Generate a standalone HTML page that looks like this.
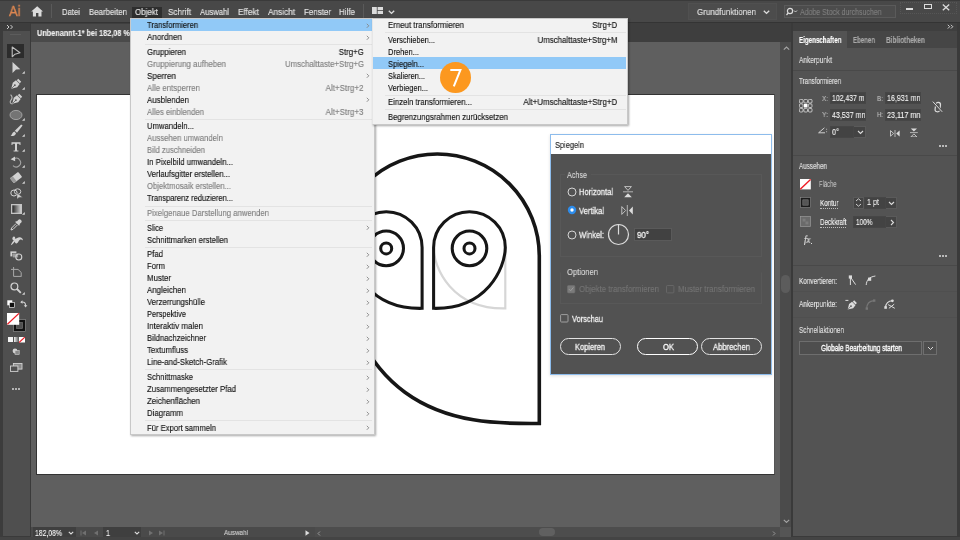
<!DOCTYPE html>
<html><head><meta charset="utf-8"><title>Illustrator</title>
<style>
html,body{margin:0;padding:0;}
body{width:960px;height:540px;overflow:hidden;position:relative;background:#4a4a4a;font-family:"Liberation Sans", sans-serif;}
#r{position:absolute;left:0;top:0;width:960px;height:540px;overflow:hidden;}
#r>div,#r>svg{position:absolute;box-sizing:border-box;}
.t{white-space:nowrap;will-change:transform;-webkit-text-stroke:0.14px;}
</style></head><body><div id="r">
<div style="left:0px;top:0px;width:960px;height:540px;background:#3a3a3a;"></div>
<div style="left:0px;top:1px;width:960px;height:21px;background:#484848;"></div>
<div style="left:0px;top:22px;width:960px;height:1px;background:#343434;"></div>
<div style="left:0px;top:23px;width:3px;height:517px;background:#3c3c3c;"></div>
<div style="left:2.8px;top:23px;width:27px;height:513.2px;background:#4f4f4f;"></div>
<div style="left:2.8px;top:23px;width:27px;height:8px;background:#3d3d3d;"></div>
<div style="left:29.7px;top:23px;width:1.5px;height:513px;background:#3a3a3a;"></div>
<div style="left:31.2px;top:23px;width:760px;height:18.5px;background:#3e3e3e;"></div>
<div style="left:31.2px;top:24px;width:210px;height:17.5px;background:#4a4a4a;"></div>
<div style="left:31.2px;top:41.5px;width:749px;height:485.5px;background:#5f5f5f;"></div>
<div style="left:36px;top:94.4px;width:739px;height:380.6px;background:#ffffff;border:1px solid #333;border-right-color:#555;"></div>
<div style="left:780px;top:42px;width:11px;height:485px;background:#4b4b4b;"></div>
<div style="left:780.9px;top:275.3px;width:9.6px;height:17.4px;background:#5c5c5c;border-radius:4.8px;"></div>
<div style="left:31.2px;top:527px;width:760px;height:10px;background:#4d4d4d;"></div>
<div style="left:780px;top:527px;width:11px;height:10px;background:#555555;"></div>
<div style="left:0px;top:537.2px;width:960px;height:3px;background:#444444;"></div>
<div style="left:791px;top:23px;width:2px;height:513px;background:#3a3a3a;"></div>
<div style="left:793px;top:23px;width:164px;height:8px;background:#3f3f3f;"></div>
<div style="left:793px;top:31px;width:164px;height:17.5px;background:#464646;"></div>
<div style="left:793px;top:31px;width:54px;height:17.5px;background:#535353;"></div>
<div style="left:793px;top:48px;width:164px;height:488px;background:#535353;"></div>
<div style="left:957px;top:23px;width:3px;height:513px;background:#3a3a3a;"></div>
<div class="t" style="left:9.3px;transform-origin:0 50%;top:1.5999999999999996px;font-size:15px;line-height:18px;color:#dd8751;font-weight:400;transform:scaleX(0.862);-webkit-text-stroke:0.35px #dd8751;">Ai</div>
<svg style="left:31px;top:6.3px;" width="12.4" height="10.6" viewBox="0 0 12.4 10.6"><path d="M6.2 0.3 L0.2 5.6 H1.9 V10.4 H5 V7 H7.4 V10.4 H10.5 V5.6 H12.2 Z" fill="#dcdcdc"/></svg>
<div style="left:51px;top:4px;width:1px;height:14px;background:#5a5a5a;"></div>
<div style="left:131.5px;top:7px;width:30.5px;height:12px;background:#2e2e2e;"></div>
<div class="t" style="left:62px;transform-origin:0 50%;top:5.5px;font-size:9px;line-height:12px;color:#e6e6e6;font-weight:400;transform:scaleX(0.857);">Datei</div>
<div class="t" style="left:89px;transform-origin:0 50%;top:5.5px;font-size:9px;line-height:12px;color:#e6e6e6;font-weight:400;transform:scaleX(0.873);">Bearbeiten</div>
<div class="t" style="left:135px;transform-origin:0 50%;top:5.5px;font-size:9px;line-height:12px;color:#e6e6e6;font-weight:400;transform:scaleX(0.884);">Objekt</div>
<div class="t" style="left:168px;transform-origin:0 50%;top:5.5px;font-size:9px;line-height:12px;color:#e6e6e6;font-weight:400;transform:scaleX(0.901);">Schrift</div>
<div class="t" style="left:200px;transform-origin:0 50%;top:5.5px;font-size:9px;line-height:12px;color:#e6e6e6;font-weight:400;transform:scaleX(0.852);">Auswahl</div>
<div class="t" style="left:238px;transform-origin:0 50%;top:5.5px;font-size:9px;line-height:12px;color:#e6e6e6;font-weight:400;transform:scaleX(0.919);">Effekt</div>
<div class="t" style="left:268px;transform-origin:0 50%;top:5.5px;font-size:9px;line-height:12px;color:#e6e6e6;font-weight:400;transform:scaleX(0.915);">Ansicht</div>
<div class="t" style="left:304px;transform-origin:0 50%;top:5.5px;font-size:9px;line-height:12px;color:#e6e6e6;font-weight:400;transform:scaleX(0.885);">Fenster</div>
<div class="t" style="left:339px;transform-origin:0 50%;top:5.5px;font-size:9px;line-height:12px;color:#e6e6e6;font-weight:400;transform:scaleX(0.888);">Hilfe</div>
<div style="left:363px;top:4px;width:1px;height:14px;background:#5a5a5a;"></div>
<svg style="left:372px;top:7.2px;" width="11" height="7.2" viewBox="0 0 11 7.2"><rect x="0" y="0" width="4.8" height="7.2" fill="#dcdcdc"/><rect x="5.6" y="0" width="5.4" height="3.2" fill="#dcdcdc"/><rect x="5.6" y="4" width="5.4" height="3.2" fill="#dcdcdc"/></svg>
<svg style="left:388px;top:10px;" width="7" height="5" viewBox="0 0 7 5"><path d="M0.8 0.8 L3.5 3.4 L6.2 0.8" stroke="#dcdcdc" stroke-width="1.4" fill="none"/></svg>
<div style="left:688px;top:2.5px;width:89px;height:17px;background:#4c4c4c;border:1px solid #505050;"></div>
<div class="t" style="left:697px;transform-origin:0 50%;top:5.5px;font-size:9px;line-height:12px;color:#e0e0e0;font-weight:400;transform:scaleX(0.887);">Grundfunktionen</div>
<svg style="left:763px;top:10.3px;" width="7" height="5" viewBox="0 0 7 5"><path d="M0.8 0.8 L3.5 3.4 L6.2 0.8" stroke="#dcdcdc" stroke-width="1.4" fill="none"/></svg>
<div style="left:783.5px;top:4.5px;width:112px;height:13px;background:#4c4c4c;border:1px solid #5a5a5a;"></div>
<svg style="left:786px;top:7px;" width="12" height="9" viewBox="0 0 12 9"><circle cx="4" cy="4" r="2.6" stroke="#dcdcdc" stroke-width="1.2" fill="none"/><path d="M2.2 6 L0.5 8" stroke="#dcdcdc" stroke-width="1.2"/><path d="M8 3.5 L9.5 5 L11 3.5" stroke="#dcdcdc" stroke-width="0.9" fill="none"/></svg>
<div class="t" style="left:800px;transform-origin:0 50%;top:5.5px;font-size:9px;line-height:12px;color:#7e7e7e;font-weight:400;transform:scaleX(0.776);">Adobe Stock durchsuchen</div>
<div style="left:900px;top:1.5px;width:57px;height:12.5px;border:1px dotted #565656;"></div>
<div style="left:906px;top:8px;width:7px;height:1.8px;background:#dcdcdc;"></div>
<div style="left:924.3px;top:4.3px;width:7.8px;height:5.2px;border:1.2px solid #dcdcdc;border-top-width:1.8px;"></div>
<svg style="left:942px;top:3.5px;" width="8" height="7" viewBox="0 0 8 7"><path d="M0.8 0.6 L7.2 6.2 M7.2 0.6 L0.8 6.2" stroke="#dcdcdc" stroke-width="1.3"/></svg>
<div class="t" style="left:37px;transform-origin:0 50%;top:27.75px;font-size:8.5px;line-height:11.5px;color:#ececec;font-weight:700;transform:scaleX(0.859);">Unbenannt-1* bei 182,08 % (RGB/GPU-Vorschau)</div>
<svg style="left:6px;top:24px;" width="8" height="6" viewBox="0 0 8 6"><path d="M1 1 L3 3 L1 5 M4.5 1 L6.5 3 L4.5 5" stroke="#dcdcdc" stroke-width="0.9" fill="none"/></svg>
<div style="left:10px;top:34px;width:11px;height:1px;background:#5c5c5c;"></div>
<svg style="left:0px;top:0px;" width="960" height="540" viewBox="0 0 960 540">
<path d="M505.3 247.5 L505.3 308.35 C452.2 309.5 433.9 268.4 433.6 247.5" fill="none" stroke="#d6d6d6" stroke-width="2.2"/>
<g fill="none" stroke="#161616" stroke-width="3.05" stroke-linejoin="miter">
<path stroke-width="3.6" d="M335 172 C322 431.8 477.4 423.5 539.3 423.5 L539.3 256 A102 102 0 0 0 335.3 256"/>
<path d="M433.6 308.35 L433.6 247.5 A35.85 35.85 0 0 1 505.3 247.5 C505 268.4 486.7 309.5 433.6 308.35 Z"/>
<circle cx="469.5" cy="248.4" r="17.3"/>
<circle cx="469.5" cy="248.4" r="5.5"/>
<path d="M422.1 308.35 L422.1 247.5 A35.85 35.85 0 0 0 350.4 247.5 C350.7 268.4 369 309.5 422.1 308.35 Z"/>
<circle cx="386.2" cy="248.4" r="17.3"/>
<circle cx="386.2" cy="248.4" r="5.5"/>
</g>
</svg>
<div style="left:130px;top:18px;width:245px;height:417px;background:#f2f2f2;border:1px solid #c8c8c8;box-shadow:1px 1px 2px rgba(0,0,0,0.35);"></div>
<div style="left:131px;top:19px;width:241px;height:12px;background:#91c9f7;"></div>
<div class="t" style="left:147px;transform-origin:0 50%;top:19.0px;font-size:9px;line-height:12px;color:#111;font-weight:400;transform:scaleX(0.840);">Transformieren</div>
<svg style="left:366px;top:22.5px;" width="4" height="6" viewBox="0 0 4 6"><path d="M0.8 0.8 L2.8 2.8 L0.8 4.8" stroke="#868686" stroke-width="0.9" fill="none"/></svg>
<div class="t" style="left:147px;transform-origin:0 50%;top:31.0px;font-size:9px;line-height:12px;color:#111;font-weight:400;transform:scaleX(0.896);">Anordnen</div>
<svg style="left:366px;top:34.5px;" width="4" height="6" viewBox="0 0 4 6"><path d="M0.8 0.8 L2.8 2.8 L0.8 4.8" stroke="#868686" stroke-width="0.9" fill="none"/></svg>
<div style="left:145px;top:43.5px;width:227px;height:1px;background:#e3e3e3;"></div>
<div class="t" style="left:147px;transform-origin:0 50%;top:45.6px;font-size:9px;line-height:12px;color:#111;font-weight:400;transform:scaleX(0.866);">Gruppieren</div>
<div class="t" style="right:596px;transform-origin:100% 50%;top:45.6px;font-size:9px;line-height:12px;color:#111;font-weight:400;transform:scaleX(0.869);">Strg+G</div>
<div class="t" style="left:147px;transform-origin:0 50%;top:57.6px;font-size:9px;line-height:12px;color:#7f7f7f;font-weight:400;transform:scaleX(0.877);">Gruppierung aufheben</div>
<div class="t" style="right:596px;transform-origin:100% 50%;top:57.6px;font-size:9px;line-height:12px;color:#7f7f7f;font-weight:400;transform:scaleX(0.868);">Umschalttaste+Strg+G</div>
<div class="t" style="left:147px;transform-origin:0 50%;top:69.6px;font-size:9px;line-height:12px;color:#111;font-weight:400;transform:scaleX(0.905);">Sperren</div>
<svg style="left:366px;top:73.1px;" width="4" height="6" viewBox="0 0 4 6"><path d="M0.8 0.8 L2.8 2.8 L0.8 4.8" stroke="#868686" stroke-width="0.9" fill="none"/></svg>
<div class="t" style="left:147px;transform-origin:0 50%;top:81.6px;font-size:9px;line-height:12px;color:#7f7f7f;font-weight:400;transform:scaleX(0.875);">Alle entsperren</div>
<div class="t" style="right:596px;transform-origin:100% 50%;top:81.6px;font-size:9px;line-height:12px;color:#7f7f7f;font-weight:400;transform:scaleX(0.893);">Alt+Strg+2</div>
<div class="t" style="left:147px;transform-origin:0 50%;top:93.6px;font-size:9px;line-height:12px;color:#111;font-weight:400;transform:scaleX(0.883);">Ausblenden</div>
<svg style="left:366px;top:97.1px;" width="4" height="6" viewBox="0 0 4 6"><path d="M0.8 0.8 L2.8 2.8 L0.8 4.8" stroke="#868686" stroke-width="0.9" fill="none"/></svg>
<div class="t" style="left:147px;transform-origin:0 50%;top:105.5px;font-size:9px;line-height:12px;color:#7f7f7f;font-weight:400;transform:scaleX(0.863);">Alles einblenden</div>
<div class="t" style="right:596px;transform-origin:100% 50%;top:105.5px;font-size:9px;line-height:12px;color:#7f7f7f;font-weight:400;transform:scaleX(0.893);">Alt+Strg+3</div>
<div style="left:145px;top:118.5px;width:227px;height:1px;background:#e3e3e3;"></div>
<div class="t" style="left:147px;transform-origin:0 50%;top:120.0px;font-size:9px;line-height:12px;color:#111;font-weight:400;transform:scaleX(0.854);">Umwandeln...</div>
<div class="t" style="left:147px;transform-origin:0 50%;top:132.0px;font-size:9px;line-height:12px;color:#7f7f7f;font-weight:400;transform:scaleX(0.858);">Aussehen umwandeln</div>
<div class="t" style="left:147px;transform-origin:0 50%;top:144.0px;font-size:9px;line-height:12px;color:#7f7f7f;font-weight:400;transform:scaleX(0.852);">Bild zuschneiden</div>
<div class="t" style="left:147px;transform-origin:0 50%;top:156.0px;font-size:9px;line-height:12px;color:#111;font-weight:400;transform:scaleX(0.864);">In Pixelbild umwandeln...</div>
<div class="t" style="left:147px;transform-origin:0 50%;top:168.0px;font-size:9px;line-height:12px;color:#111;font-weight:400;transform:scaleX(0.860);">Verlaufsgitter erstellen...</div>
<div class="t" style="left:147px;transform-origin:0 50%;top:180.0px;font-size:9px;line-height:12px;color:#7f7f7f;font-weight:400;transform:scaleX(0.852);">Objektmosaik erstellen...</div>
<div class="t" style="left:147px;transform-origin:0 50%;top:192.0px;font-size:9px;line-height:12px;color:#111;font-weight:400;transform:scaleX(0.837);">Transparenz reduzieren...</div>
<div style="left:145px;top:205.5px;width:227px;height:1px;background:#e3e3e3;"></div>
<div class="t" style="left:147px;transform-origin:0 50%;top:207.0px;font-size:9px;line-height:12px;color:#7f7f7f;font-weight:400;transform:scaleX(0.862);">Pixelgenaue Darstellung anwenden</div>
<div style="left:145px;top:219.5px;width:227px;height:1px;background:#e3e3e3;"></div>
<div class="t" style="left:147px;transform-origin:0 50%;top:221.5px;font-size:9px;line-height:12px;color:#111;font-weight:400;transform:scaleX(0.820);">Slice</div>
<svg style="left:366px;top:225.0px;" width="4" height="6" viewBox="0 0 4 6"><path d="M0.8 0.8 L2.8 2.8 L0.8 4.8" stroke="#868686" stroke-width="0.9" fill="none"/></svg>
<div class="t" style="left:147px;transform-origin:0 50%;top:233.5px;font-size:9px;line-height:12px;color:#111;font-weight:400;transform:scaleX(0.861);">Schnittmarken erstellen</div>
<div style="left:145px;top:246.5px;width:227px;height:1px;background:#e3e3e3;"></div>
<div class="t" style="left:147px;transform-origin:0 50%;top:248.0px;font-size:9px;line-height:12px;color:#111;font-weight:400;transform:scaleX(0.864);">Pfad</div>
<svg style="left:366px;top:251.5px;" width="4" height="6" viewBox="0 0 4 6"><path d="M0.8 0.8 L2.8 2.8 L0.8 4.8" stroke="#868686" stroke-width="0.9" fill="none"/></svg>
<div class="t" style="left:147px;transform-origin:0 50%;top:260.0px;font-size:9px;line-height:12px;color:#111;font-weight:400;transform:scaleX(0.857);">Form</div>
<svg style="left:366px;top:263.5px;" width="4" height="6" viewBox="0 0 4 6"><path d="M0.8 0.8 L2.8 2.8 L0.8 4.8" stroke="#868686" stroke-width="0.9" fill="none"/></svg>
<div class="t" style="left:147px;transform-origin:0 50%;top:272.0px;font-size:9px;line-height:12px;color:#111;font-weight:400;transform:scaleX(0.872);">Muster</div>
<svg style="left:366px;top:275.5px;" width="4" height="6" viewBox="0 0 4 6"><path d="M0.8 0.8 L2.8 2.8 L0.8 4.8" stroke="#868686" stroke-width="0.9" fill="none"/></svg>
<div class="t" style="left:147px;transform-origin:0 50%;top:284.0px;font-size:9px;line-height:12px;color:#111;font-weight:400;transform:scaleX(0.875);">Angleichen</div>
<svg style="left:366px;top:287.5px;" width="4" height="6" viewBox="0 0 4 6"><path d="M0.8 0.8 L2.8 2.8 L0.8 4.8" stroke="#868686" stroke-width="0.9" fill="none"/></svg>
<div class="t" style="left:147px;transform-origin:0 50%;top:296.0px;font-size:9px;line-height:12px;color:#111;font-weight:400;transform:scaleX(0.859);">Verzerrungshülle</div>
<svg style="left:366px;top:299.5px;" width="4" height="6" viewBox="0 0 4 6"><path d="M0.8 0.8 L2.8 2.8 L0.8 4.8" stroke="#868686" stroke-width="0.9" fill="none"/></svg>
<div class="t" style="left:147px;transform-origin:0 50%;top:308.0px;font-size:9px;line-height:12px;color:#111;font-weight:400;transform:scaleX(0.829);">Perspektive</div>
<svg style="left:366px;top:311.5px;" width="4" height="6" viewBox="0 0 4 6"><path d="M0.8 0.8 L2.8 2.8 L0.8 4.8" stroke="#868686" stroke-width="0.9" fill="none"/></svg>
<div class="t" style="left:147px;transform-origin:0 50%;top:320.0px;font-size:9px;line-height:12px;color:#111;font-weight:400;transform:scaleX(0.881);">Interaktiv malen</div>
<svg style="left:366px;top:323.5px;" width="4" height="6" viewBox="0 0 4 6"><path d="M0.8 0.8 L2.8 2.8 L0.8 4.8" stroke="#868686" stroke-width="0.9" fill="none"/></svg>
<div class="t" style="left:147px;transform-origin:0 50%;top:332.0px;font-size:9px;line-height:12px;color:#111;font-weight:400;transform:scaleX(0.861);">Bildnachzeichner</div>
<svg style="left:366px;top:335.5px;" width="4" height="6" viewBox="0 0 4 6"><path d="M0.8 0.8 L2.8 2.8 L0.8 4.8" stroke="#868686" stroke-width="0.9" fill="none"/></svg>
<div class="t" style="left:147px;transform-origin:0 50%;top:344.0px;font-size:9px;line-height:12px;color:#111;font-weight:400;transform:scaleX(0.863);">Textumfluss</div>
<svg style="left:366px;top:347.5px;" width="4" height="6" viewBox="0 0 4 6"><path d="M0.8 0.8 L2.8 2.8 L0.8 4.8" stroke="#868686" stroke-width="0.9" fill="none"/></svg>
<div class="t" style="left:147px;transform-origin:0 50%;top:356.0px;font-size:9px;line-height:12px;color:#111;font-weight:400;transform:scaleX(0.864);">Line-and-Sketch-Grafik</div>
<svg style="left:366px;top:359.5px;" width="4" height="6" viewBox="0 0 4 6"><path d="M0.8 0.8 L2.8 2.8 L0.8 4.8" stroke="#868686" stroke-width="0.9" fill="none"/></svg>
<div style="left:145px;top:369px;width:227px;height:1px;background:#e3e3e3;"></div>
<div class="t" style="left:147px;transform-origin:0 50%;top:371.0px;font-size:9px;line-height:12px;color:#111;font-weight:400;transform:scaleX(0.851);">Schnittmaske</div>
<svg style="left:366px;top:374.5px;" width="4" height="6" viewBox="0 0 4 6"><path d="M0.8 0.8 L2.8 2.8 L0.8 4.8" stroke="#868686" stroke-width="0.9" fill="none"/></svg>
<div class="t" style="left:147px;transform-origin:0 50%;top:383.0px;font-size:9px;line-height:12px;color:#111;font-weight:400;transform:scaleX(0.864);">Zusammengesetzter Pfad</div>
<svg style="left:366px;top:386.5px;" width="4" height="6" viewBox="0 0 4 6"><path d="M0.8 0.8 L2.8 2.8 L0.8 4.8" stroke="#868686" stroke-width="0.9" fill="none"/></svg>
<div class="t" style="left:147px;transform-origin:0 50%;top:395.0px;font-size:9px;line-height:12px;color:#111;font-weight:400;transform:scaleX(0.868);">Zeichenflächen</div>
<svg style="left:366px;top:398.5px;" width="4" height="6" viewBox="0 0 4 6"><path d="M0.8 0.8 L2.8 2.8 L0.8 4.8" stroke="#868686" stroke-width="0.9" fill="none"/></svg>
<div class="t" style="left:147px;transform-origin:0 50%;top:407.0px;font-size:9px;line-height:12px;color:#111;font-weight:400;transform:scaleX(0.867);">Diagramm</div>
<svg style="left:366px;top:410.5px;" width="4" height="6" viewBox="0 0 4 6"><path d="M0.8 0.8 L2.8 2.8 L0.8 4.8" stroke="#868686" stroke-width="0.9" fill="none"/></svg>
<div style="left:145px;top:420px;width:227px;height:1px;background:#e3e3e3;"></div>
<div class="t" style="left:147px;transform-origin:0 50%;top:421.5px;font-size:9px;line-height:12px;color:#111;font-weight:400;transform:scaleX(0.852);">Für Export sammeln</div>
<svg style="left:366px;top:425.0px;" width="4" height="6" viewBox="0 0 4 6"><path d="M0.8 0.8 L2.8 2.8 L0.8 4.8" stroke="#868686" stroke-width="0.9" fill="none"/></svg>
<div style="left:372px;top:18px;width:256px;height:107px;background:#f2f2f2;border:1px solid #c8c8c8;border-left-color:#e6e6e6;box-shadow:1px 1px 2px rgba(0,0,0,0.35);"></div>
<div style="left:373px;top:57px;width:253px;height:12px;background:#91c9f7;"></div>
<div class="t" style="left:388px;transform-origin:0 50%;top:19.0px;font-size:9px;line-height:12px;color:#111;font-weight:400;transform:scaleX(0.873);">Erneut transformieren</div>
<div class="t" style="right:342.5px;transform-origin:100% 50%;top:19.0px;font-size:9px;line-height:12px;color:#111;font-weight:400;transform:scaleX(0.884);">Strg+D</div>
<div style="left:385px;top:32px;width:241px;height:1px;background:#e3e3e3;"></div>
<div class="t" style="left:388px;transform-origin:0 50%;top:34.0px;font-size:9px;line-height:12px;color:#111;font-weight:400;transform:scaleX(0.824);">Verschieben...</div>
<div class="t" style="right:342.5px;transform-origin:100% 50%;top:34.0px;font-size:9px;line-height:12px;color:#111;font-weight:400;transform:scaleX(0.874);">Umschalttaste+Strg+M</div>
<div class="t" style="left:388px;transform-origin:0 50%;top:46.0px;font-size:9px;line-height:12px;color:#111;font-weight:400;transform:scaleX(0.837);">Drehen...</div>
<div class="t" style="left:388px;transform-origin:0 50%;top:57.5px;font-size:9px;line-height:12px;color:#111;font-weight:400;transform:scaleX(0.846);">Spiegeln...</div>
<div class="t" style="left:388px;transform-origin:0 50%;top:69.5px;font-size:9px;line-height:12px;color:#111;font-weight:400;transform:scaleX(0.822);">Skalieren...</div>
<div class="t" style="left:388px;transform-origin:0 50%;top:81.5px;font-size:9px;line-height:12px;color:#111;font-weight:400;transform:scaleX(0.833);">Verbiegen...</div>
<div style="left:385px;top:94.5px;width:241px;height:1px;background:#e3e3e3;"></div>
<div class="t" style="left:388px;transform-origin:0 50%;top:96.0px;font-size:9px;line-height:12px;color:#111;font-weight:400;transform:scaleX(0.861);">Einzeln transformieren...</div>
<div class="t" style="right:342.5px;transform-origin:100% 50%;top:96.0px;font-size:9px;line-height:12px;color:#111;font-weight:400;transform:scaleX(0.884);">Alt+Umschalttaste+Strg+D</div>
<div style="left:385px;top:109px;width:241px;height:1px;background:#e3e3e3;"></div>
<div class="t" style="left:388px;transform-origin:0 50%;top:110.5px;font-size:9px;line-height:12px;color:#111;font-weight:400;transform:scaleX(0.863);">Begrenzungsrahmen zurücksetzen</div>
<div style="left:440.1px;top:61.9px;width:31px;height:31.4px;background:#fc981f;border-radius:50%;"></div>
<svg style="left:445px;top:64px;" width="22" height="26" viewBox="0 0 22 26"><path d="M5.3 5.9 H15.4 L8.8 22.4" fill="none" stroke="#fff" stroke-width="2" stroke-linejoin="miter" stroke-linecap="butt"/></svg>
<div style="left:7.2px;top:44.1px;width:17.3px;height:13.9px;background:#2c2c2c;"></div>
<svg style="left:10px;top:45.7px;" width="12" height="13" viewBox="0 0 12 13"><path d="M2.2 1 L2.2 10.8 L5 8.2 L10 6.8 Z" fill="none" stroke="#bebebe" stroke-width="1.1" stroke-linejoin="round"/></svg>
<svg style="left:11px;top:61px;" width="12" height="13" viewBox="0 0 12 13"><path d="M1.5 1 L1.5 12 L5 8.6 L9.3 8.2 Z" fill="#d2d2d2"/></svg>
<svg style="left:22.4px;top:71.3px;" width="2.8" height="2.8" viewBox="0 0 2.8 2.8"><path d="M2.8 0 V2.8 H0 Z" fill="#d2d2d2"/></svg>
<svg style="left:9.0px;top:77.6px;overflow:visible;" width="13" height="13" viewBox="0 0 13 13"><g transform="translate(6.5 6.5) scale(0.84) rotate(45) translate(-6.5 -5.5)"><path d="M4 -1.6 H9 V0.8 H4 Z M3.4 1.6 H9.6 L10.2 6.4 L6.5 12.6 L2.8 6.4 Z" fill="#d2d2d2"/><circle cx="6.5" cy="6.6" r="1.1" fill="#4f4f4f"/><path d="M6.5 7.2 V12" stroke="#4f4f4f" stroke-width="0.8"/></g></svg>
<svg style="left:22.4px;top:87.1px;" width="2.8" height="2.8" viewBox="0 0 2.8 2.8"><path d="M2.8 0 V2.8 H0 Z" fill="#d2d2d2"/></svg>
<svg style="left:9.8px;top:93.4px;overflow:visible;" width="13" height="13" viewBox="0 0 13 13"><g transform="translate(6.5 6.5) scale(0.84) rotate(45) translate(-6.5 -5.5)"><path d="M4 -1.6 H9 V0.8 H4 Z M3.4 1.6 H9.6 L10.2 6.4 L6.5 12.6 L2.8 6.4 Z" fill="#d2d2d2"/><circle cx="6.5" cy="6.6" r="1.1" fill="#4f4f4f"/><path d="M6.5 7.2 V12" stroke="#4f4f4f" stroke-width="0.8"/></g></svg>
<svg style="left:8.5px;top:94px;" width="6" height="11" viewBox="0 0 6 11"><path d="M1.6 0.6 C3.6 2.6 3.4 4.4 2 6.2 C0.6 8 1 9.6 3.6 10" fill="none" stroke="#b8b8b8" stroke-width="1.1"/></svg>
<svg style="left:9px;top:108.5px;" width="14" height="12" viewBox="0 0 14 12"><ellipse cx="7" cy="6" rx="6" ry="4.6" fill="#747474" stroke="#a8a8a8" stroke-width="0.9"/></svg>
<svg style="left:22.4px;top:118.3px;" width="2.8" height="2.8" viewBox="0 0 2.8 2.8"><path d="M2.8 0 V2.8 H0 Z" fill="#d2d2d2"/></svg>
<svg style="left:10px;top:123.5px;" width="13" height="13" viewBox="0 0 13 13"><path d="M11.2 0.4 L12.6 1.6 L7 8.8 L4.8 6.8 Z" fill="#d2d2d2"/><path d="M4.4 7.6 L6 9.2 C5.6 11.8 2.6 12.4 0.6 12 C2.2 11 2 8.4 4.4 7.6 Z" fill="#d2d2d2"/></svg>
<svg style="left:22.4px;top:134.3px;" width="2.8" height="2.8" viewBox="0 0 2.8 2.8"><path d="M2.8 0 V2.8 H0 Z" fill="#d2d2d2"/></svg>
<svg style="left:11px;top:141.5px;" width="10" height="10" viewBox="0 0 10 10"><path d="M0.5 0.3 H9.5 V3 H8.5 V1.8 H6 V8.4 H7.4 V9.6 H2.6 V8.4 H4 V1.8 H1.5 V3 H0.5 Z" fill="#d2d2d2"/></svg>
<svg style="left:22.4px;top:149.3px;" width="2.8" height="2.8" viewBox="0 0 2.8 2.8"><path d="M2.8 0 V2.8 H0 Z" fill="#d2d2d2"/></svg>
<svg style="left:10px;top:155.5px;" width="12" height="12" viewBox="0 0 12 12"><path d="M4.2 2.6 A4.4 4.4 0 1 1 3 9.6" fill="none" stroke="#a4a4a4" stroke-width="1.1"/><path d="M0.6 3.2 L5 0.4 L5.2 5.2 Z" fill="#d2d2d2"/></svg>
<svg style="left:22.4px;top:165.3px;" width="2.8" height="2.8" viewBox="0 0 2.8 2.8"><path d="M2.8 0 V2.8 H0 Z" fill="#d2d2d2"/></svg>
<svg style="left:10px;top:171.5px;" width="12" height="11" viewBox="0 0 12 11"><g transform="rotate(-38 6 5.5)"><rect x="0.8" y="2.4" width="10.4" height="6.4" rx="0.8" fill="#d2d2d2"/><rect x="0.8" y="2.4" width="3.4" height="6.4" fill="#9a9a9a"/></g></svg>
<svg style="left:22.4px;top:180.8px;" width="2.8" height="2.8" viewBox="0 0 2.8 2.8"><path d="M2.8 0 V2.8 H0 Z" fill="#d2d2d2"/></svg>
<svg style="left:9.5px;top:188px;" width="14" height="12" viewBox="0 0 14 12"><ellipse cx="4" cy="5" rx="3.2" ry="3" fill="none" stroke="#d2d2d2" stroke-width="1"/><ellipse cx="7.6" cy="3.6" rx="3.2" ry="2.8" fill="none" stroke="#d2d2d2" stroke-width="1"/><path d="M7 5 L7 11.2 L9 9.4 L12.6 9.2 Z" fill="#d2d2d2" stroke="#4f4f4f" stroke-width="0.5"/></svg>
<svg style="left:10.5px;top:204px;" width="11" height="10" viewBox="0 0 11 10"><defs><linearGradient id="gg" x1="0" x2="1"><stop offset="0.12" stop-color="#2e2e2e"/><stop offset="0.95" stop-color="#d0d0d0"/></linearGradient></defs><rect x="0.6" y="0.6" width="9.8" height="8.8" fill="url(#gg)" stroke="#c4c4c4" stroke-width="1.4"/></svg>
<svg style="left:22.4px;top:212.3px;" width="2.8" height="2.8" viewBox="0 0 2.8 2.8"><path d="M2.8 0 V2.8 H0 Z" fill="#d2d2d2"/></svg>
<svg style="left:10px;top:219px;" width="12" height="12" viewBox="0 0 12 12"><path d="M8.2 1 A1.9 1.9 0 0 1 11 3.8 L9.4 5.2 L10 5.8 L9 6.8 L5.2 3 L6.2 2 L6.8 2.6 Z" fill="#d2d2d2"/><path d="M6 4.6 L1.6 9 L1 11 L3 10.4 L7.4 6" fill="none" stroke="#d2d2d2" stroke-width="1"/></svg>
<svg style="left:9.5px;top:235.5px;" width="14" height="10" viewBox="0 0 14 10"><path d="M3.6 0.6 C5 0.4 5.6 1.6 4.8 2.8 C7 2.8 7.6 1 10 1.2 C12 1.4 13.2 3 12.8 4.4 C12 3.6 10.6 3.2 9.6 4 C8 5.2 8.6 7 6.6 7.4 C5.4 7.6 4.8 6.6 5 5.6 C3.6 6.6 3 8.6 0.8 9.2 C1.4 7.6 2.4 5.8 3.8 4.4 C2.4 4.2 2 2.8 2.6 1.6 Z" fill="#d2d2d2"/></svg>
<svg style="left:10px;top:251px;" width="13" height="10" viewBox="0 0 13 10"><rect x="0.4" y="0.4" width="6" height="5" fill="#d2d2d2"/><rect x="2.6" y="2.2" width="5.6" height="4.6" fill="#9c9c9c" stroke="#4f4f4f" stroke-width="0.5"/><circle cx="8.8" cy="6" r="3" fill="none" stroke="#d2d2d2" stroke-width="1.1"/></svg>
<svg style="left:10.5px;top:267px;" width="11" height="10" viewBox="0 0 11 10"><path d="M2.6 0 V9.4 H10.6 M0 2.4 H7 L10.2 5.4 V9" fill="none" stroke="#a8a8a8" stroke-width="1"/></svg>
<svg style="left:10px;top:282px;" width="12" height="12" viewBox="0 0 12 12"><circle cx="4.4" cy="4.4" r="3.4" fill="none" stroke="#d2d2d2" stroke-width="1.2"/><path d="M7 7 L10.8 10.8" stroke="#d2d2d2" stroke-width="1.8"/></svg>
<svg style="left:22.4px;top:291.8px;" width="2.8" height="2.8" viewBox="0 0 2.8 2.8"><path d="M2.8 0 V2.8 H0 Z" fill="#d2d2d2"/></svg>
<svg style="left:6.5px;top:300px;" width="8" height="8" viewBox="0 0 8 8"><rect x="0.3" y="0.3" width="5" height="5" fill="#fff"/><rect x="2.4" y="2.4" width="5" height="5" fill="#111" stroke="#fff" stroke-width="0.6"/></svg>
<svg style="left:19.5px;top:300px;" width="8" height="8" viewBox="0 0 8 8"><path d="M1.4 2 C4.4 1.6 5.6 3 5.6 6" fill="none" stroke="#d2d2d2" stroke-width="1.1"/><path d="M0.2 2.2 L2.4 0.2 L2.6 3.8 Z M3.8 5.2 L7.4 5.2 L5.6 7.6 Z" fill="#d2d2d2"/></svg>
<svg style="left:13.3px;top:319px;" width="13" height="13" viewBox="0 0 13 13"><rect x="0.5" y="0.5" width="12" height="12" fill="#111" stroke="#9a9a9a" stroke-width="0.6"/><rect x="3.4" y="3.4" width="6.2" height="6.2" fill="#4f4f4f" stroke="#777" stroke-width="0.6"/></svg>
<svg style="left:6.9px;top:312.5px;" width="13" height="12" viewBox="0 0 13 12"><rect x="0" y="0" width="12.2" height="11.8" fill="#fff"/><path d="M0.3 11.4 L12 0.4" stroke="#ee1c25" stroke-width="1.3"/></svg>
<div style="left:7.5px;top:336.5px;width:5.5px;height:5.5px;background:#f4f4f4;"></div>
<div style="left:13.5px;top:336.5px;width:5px;height:5.5px;background:linear-gradient(90deg,#f0f0f0,#555);"></div>
<svg style="left:19px;top:336.5px;" width="6" height="6" viewBox="0 0 6 6"><rect x="0" y="0" width="6" height="5.5" fill="#fff"/><path d="M0 5.5 L6 0" stroke="#ee1c25" stroke-width="1.2"/></svg>
<svg style="left:12px;top:348px;" width="8" height="7" viewBox="0 0 8 7"><circle cx="3" cy="3" r="2.4" fill="#d2d2d2"/><rect x="3" y="2.6" width="4.2" height="3.8" fill="#8a8a8a" stroke="#d2d2d2" stroke-width="0.6"/></svg>
<svg style="left:10px;top:363px;" width="13" height="9" viewBox="0 0 13 9"><rect x="3.4" y="0.5" width="8.6" height="5.6" fill="#8a8a8a" stroke="#d2d2d2" stroke-width="0.9"/><rect x="0.5" y="3" width="7.4" height="5.4" fill="#4f4f4f" stroke="#d2d2d2" stroke-width="0.9"/></svg>
<div style="left:12.2px;top:388.2px;width:1.8px;height:1.8px;background:#d2d2d2;border-radius:50%;"></div>
<div style="left:15.2px;top:388.2px;width:1.8px;height:1.8px;background:#d2d2d2;border-radius:50%;"></div>
<div style="left:18.2px;top:388.2px;width:1.8px;height:1.8px;background:#d2d2d2;border-radius:50%;"></div>
<div style="left:550px;top:134px;width:222px;height:241px;background:#525252;border:1px solid #8dbcec;box-shadow:0 1px 3px rgba(0,0,0,0.12);"></div>
<div style="left:551px;top:135px;width:220px;height:19px;background:#ffffff;"></div>
<div class="t" style="left:555px;transform-origin:0 50%;top:138.75px;font-size:9.5px;line-height:12.5px;color:#222;font-weight:400;transform:scaleX(0.784);">Spiegeln</div>
<div style="left:560px;top:174px;width:202px;height:83px;border:1px solid #585858;"></div>
<div style="left:565px;top:169px;width:26px;height:10px;background:#525252;"></div>
<div class="t" style="left:567px;transform-origin:0 50%;top:168.5px;font-size:9px;line-height:12px;color:#d8d8d8;font-weight:400;transform:scaleX(0.800);">Achse</div>
<svg style="left:566.5px;top:187px;" width="10" height="10" viewBox="0 0 10 10"><circle cx="5" cy="5" r="4" fill="none" stroke="#d4d4d4" stroke-width="1"/></svg>
<div class="t" style="left:579px;transform-origin:0 50%;top:186.0px;font-size:9px;line-height:12px;color:#f0f0f0;font-weight:400;transform:scaleX(0.839);-webkit-text-stroke:0.3px;">Horizontal</div>
<svg style="left:623px;top:186px;" width="10" height="12" viewBox="0 0 10 12"><path d="M1.6 0.6 H8.4 L5 4.4 Z" fill="none" stroke="#dcdcdc" stroke-width="0.8"/><path d="M0 5.8 H10" stroke="#dcdcdc" stroke-width="0.7"/><path d="M1.2 11.2 H8.8 L5 7.2 Z" fill="#dcdcdc"/></svg>
<svg style="left:566.5px;top:205px;" width="10" height="10" viewBox="0 0 10 10"><circle cx="5" cy="5" r="4.2" fill="#2d8ceb"/><circle cx="5" cy="5" r="1.7" fill="#fff"/></svg>
<div class="t" style="left:579px;transform-origin:0 50%;top:204.5px;font-size:9px;line-height:12px;color:#f0f0f0;font-weight:400;transform:scaleX(0.847);-webkit-text-stroke:0.3px;">Vertikal</div>
<svg style="left:621px;top:204.5px;" width="13" height="11" viewBox="0 0 13 11"><path d="M0.8 1.6 V9.4 L4.6 5.5 Z" fill="none" stroke="#dcdcdc" stroke-width="0.8"/><path d="M6.3 0 V11" stroke="#dcdcdc" stroke-width="0.7"/><path d="M11.8 1.6 V9.4 L8 5.5 Z" fill="#dcdcdc"/></svg>
<svg style="left:566.5px;top:229.5px;" width="10" height="10" viewBox="0 0 10 10"><circle cx="5" cy="5" r="4" fill="none" stroke="#d4d4d4" stroke-width="1"/></svg>
<div class="t" style="left:579px;transform-origin:0 50%;top:228.5px;font-size:9px;line-height:12px;color:#f0f0f0;font-weight:400;transform:scaleX(0.847);-webkit-text-stroke:0.3px;">Winkel:</div>
<svg style="left:607px;top:223px;" width="23" height="23" viewBox="0 0 23 23"><circle cx="11.5" cy="11.5" r="10" fill="none" stroke="#dcdcdc" stroke-width="1.2"/><path d="M11.5 1.5 V11.5" stroke="#dcdcdc" stroke-width="1.2"/></svg>
<div style="left:634px;top:228px;width:38px;height:13px;background:#414141;border:1px solid #5a5a5a;"></div>
<div class="t" style="left:637px;transform-origin:0 50%;top:228.5px;font-size:9px;line-height:12px;color:#f0f0f0;font-weight:400;transform:scaleX(0.881);-webkit-text-stroke:0.3px;">90°</div>
<div style="left:560px;top:272px;width:202px;height:32px;border:1px solid #585858;border-top-color:transparent;"></div>
<div class="t" style="left:567px;transform-origin:0 50%;top:266.0px;font-size:9px;line-height:12px;color:#d8d8d8;font-weight:400;transform:scaleX(0.849);">Optionen</div>
<svg style="left:567px;top:285px;" width="9" height="9" viewBox="0 0 9 9"><rect x="0.5" y="0.5" width="7.4" height="7.4" rx="0.8" fill="#7a7a7a" stroke="#707070" stroke-width="0.6"/><path d="M2 4.2 L3.6 5.8 L6.4 2.4" stroke="#9c9c9c" stroke-width="1" fill="none"/></svg>
<div class="t" style="left:579px;transform-origin:0 50%;top:283.0px;font-size:9px;line-height:12px;color:#747474;font-weight:400;transform:scaleX(0.874);">Objekte transformieren</div>
<svg style="left:666px;top:285px;" width="9" height="9" viewBox="0 0 9 9"><rect x="0.5" y="0.5" width="7.4" height="7.4" rx="0.8" fill="none" stroke="#6c6c6c" stroke-width="0.8"/></svg>
<div class="t" style="left:678px;transform-origin:0 50%;top:283.0px;font-size:9px;line-height:12px;color:#747474;font-weight:400;transform:scaleX(0.875);">Muster transformieren</div>
<svg style="left:560px;top:314px;" width="9" height="9" viewBox="0 0 9 9"><rect x="0.6" y="0.6" width="7.4" height="7.4" rx="0.8" fill="none" stroke="#a8a8a8" stroke-width="0.9"/></svg>
<div class="t" style="left:572px;transform-origin:0 50%;top:312.5px;font-size:9px;line-height:12px;color:#f0f0f0;font-weight:400;transform:scaleX(0.826);-webkit-text-stroke:0.3px;">Vorschau</div>
<div style="left:560px;top:338px;width:61px;height:17px;border:1.25px solid #e2e2e2;border-radius:9px;"></div>
<div class="t" style="left:575px;transform-origin:0 50%;top:340.5px;font-size:9px;line-height:12px;color:#f4f4f4;font-weight:400;transform:scaleX(0.833);-webkit-text-stroke:0.3px;">Kopieren</div>
<div style="left:637px;top:337.8px;width:61px;height:17.4px;border:1.9px solid #ffffff;border-radius:9px;"></div>
<div class="t" style="left:662.5px;transform-origin:0 50%;top:340.5px;font-size:9px;line-height:12px;color:#ffffff;font-weight:400;transform:scaleX(0.845);-webkit-text-stroke:0.3px;">OK</div>
<div style="left:701px;top:338px;width:61px;height:17px;border:1.25px solid #e2e2e2;border-radius:9px;"></div>
<div class="t" style="left:713px;transform-origin:0 50%;top:340.5px;font-size:9px;line-height:12px;color:#f4f4f4;font-weight:400;transform:scaleX(0.850);-webkit-text-stroke:0.3px;">Abbrechen</div>
<svg style="left:946.5px;top:24px;" width="7" height="5.4" viewBox="0 0 7 5.4"><path d="M0.8 0.8 L2.7 2.7 L0.8 4.6 M3.9 0.8 L5.8 2.7 L3.9 4.6" stroke="#dcdcdc" stroke-width="0.9" fill="none"/></svg>
<div class="t" style="left:799px;transform-origin:0 50%;top:34.55px;font-size:8.5px;line-height:11.5px;color:#ffffff;font-weight:700;transform:scaleX(0.731);">Eigenschaften</div>
<div class="t" style="left:853px;transform-origin:0 50%;top:34.55px;font-size:8.5px;line-height:11.5px;color:#a8a8a8;font-weight:700;transform:scaleX(0.717);">Ebenen</div>
<div class="t" style="left:886px;transform-origin:0 50%;top:34.55px;font-size:8.5px;line-height:11.5px;color:#a8a8a8;font-weight:700;transform:scaleX(0.764);">Bibliotheken</div>
<div class="t" style="left:799.2px;transform-origin:0 50%;top:53.8px;font-size:9px;line-height:12px;color:#e0e0e0;font-weight:400;transform:scaleX(0.725);">Ankerpunkt</div>
<div style="left:793px;top:70px;width:164px;height:1px;background:#494949;"></div>
<div class="t" style="left:799.2px;transform-origin:0 50%;top:74.8px;font-size:9px;line-height:12px;color:#e0e0e0;font-weight:400;transform:scaleX(0.692);">Transformieren</div>
<svg style="left:799px;top:99px;" width="14" height="14" viewBox="0 0 14 14"><rect x="0.4" y="0.4" width="3.6" height="3.6" rx="1" fill="none" stroke="#dcdcdc" stroke-width="0.8"/><rect x="4.9" y="0.4" width="3.6" height="3.6" rx="1" fill="none" stroke="#dcdcdc" stroke-width="0.8"/><rect x="9.4" y="0.4" width="3.6" height="3.6" rx="1" fill="none" stroke="#dcdcdc" stroke-width="0.8"/><rect x="0.4" y="4.9" width="3.6" height="3.6" rx="1" fill="none" stroke="#dcdcdc" stroke-width="0.8"/><rect x="4.9" y="4.9" width="3.6" height="3.6" fill="#fff"/><rect x="9.4" y="4.9" width="3.6" height="3.6" rx="1" fill="none" stroke="#dcdcdc" stroke-width="0.8"/><rect x="0.4" y="9.4" width="3.6" height="3.6" rx="1" fill="none" stroke="#dcdcdc" stroke-width="0.8"/><rect x="4.9" y="9.4" width="3.6" height="3.6" rx="1" fill="none" stroke="#dcdcdc" stroke-width="0.8"/><rect x="9.4" y="9.4" width="3.6" height="3.6" rx="1" fill="none" stroke="#dcdcdc" stroke-width="0.8"/></svg>
<div class="t" style="left:822px;transform-origin:0 50%;top:92.5px;font-size:8px;line-height:11px;color:#bdbdbd;font-weight:400;transform:scaleX(0.793);">X:</div>
<div style="left:830px;top:92px;width:36px;height:12px;background:#434343;border:1px solid #464646;overflow:hidden;"></div>
<div class="t" style="left:832px;transform-origin:0 50%;top:91.5px;font-size:9px;line-height:12px;color:#f2f2f2;font-weight:400;transform:scaleX(0.764);">102,437 m</div>
<div class="t" style="left:877px;transform-origin:0 50%;top:92.5px;font-size:8px;line-height:11px;color:#bdbdbd;font-weight:400;transform:scaleX(0.793);">B:</div>
<div style="left:885px;top:92px;width:36px;height:12px;background:#434343;border:1px solid #464646;overflow:hidden;"></div>
<div class="t" style="left:887px;transform-origin:0 50%;top:91.5px;font-size:9px;line-height:12px;color:#f2f2f2;font-weight:400;transform:scaleX(0.788);">16,931 mn</div>
<div class="t" style="left:822px;transform-origin:0 50%;top:109.0px;font-size:8px;line-height:11px;color:#bdbdbd;font-weight:400;transform:scaleX(0.842);">Y:</div>
<div style="left:830px;top:109px;width:36px;height:12px;background:#434343;border:1px solid #464646;overflow:hidden;"></div>
<div class="t" style="left:832px;transform-origin:0 50%;top:108.5px;font-size:9px;line-height:12px;color:#f2f2f2;font-weight:400;transform:scaleX(0.788);">43,537 mn</div>
<div class="t" style="left:877px;transform-origin:0 50%;top:109.0px;font-size:8px;line-height:11px;color:#bdbdbd;font-weight:400;transform:scaleX(0.750);">H:</div>
<div style="left:885px;top:109px;width:36px;height:12px;background:#434343;border:1px solid #464646;overflow:hidden;"></div>
<div class="t" style="left:887px;transform-origin:0 50%;top:108.5px;font-size:9px;line-height:12px;color:#f2f2f2;font-weight:400;transform:scaleX(0.800);">23,117 mn</div>
<svg style="left:931.5px;top:101px;" width="11" height="12" viewBox="0 0 11 12"><rect x="3.4" y="1.4" width="4.8" height="9.4" rx="2.4" transform="rotate(8 5.8 6)" fill="none" stroke="#dcdcdc" stroke-width="1.2"/><path d="M0.8 0.6 L10.2 10.8" stroke="#535353" stroke-width="2.6"/><path d="M0.8 0.6 L10.2 10.8" stroke="#dcdcdc" stroke-width="1"/></svg>
<svg style="left:818px;top:127px;" width="10" height="7" viewBox="0 0 10 7"><path d="M0.6 5.8 H7 M0.6 5.8 L6.4 0.8" stroke="#dcdcdc" stroke-width="0.9" fill="none"/><path d="M8.6 1.8 V2.6 M8.6 4.4 V5.2" stroke="#dcdcdc" stroke-width="0.9"/></svg>
<div style="left:830px;top:126px;width:24px;height:12px;background:#434343;border:1px solid #464646;overflow:hidden;"></div>
<div class="t" style="left:832px;transform-origin:0 50%;top:125.5px;font-size:9px;line-height:12px;color:#f2f2f2;font-weight:400;transform:scaleX(0.813);">0°</div>
<div style="left:854px;top:126px;width:12px;height:12px;background:#434343;border:1px solid #5a5a5a;border-left:none;"></div>
<svg style="left:856.5px;top:130px;" width="7" height="5" viewBox="0 0 7 5"><path d="M1 1 L3.5 3.5 L6 1" stroke="#dcdcdc" stroke-width="1.1" fill="none"/></svg>
<svg style="left:890px;top:129.5px;" width="10" height="7" viewBox="0 0 10 7"><path d="M0.5 0.6 V6.2 L3.6 3.4 Z" fill="none" stroke="#dcdcdc" stroke-width="0.8"/><path d="M5 0 V7" stroke="#dcdcdc" stroke-width="0.7"/><path d="M9.6 0.4 V6.4 L6.2 3.4 Z" fill="#dcdcdc"/></svg>
<svg style="left:910.4px;top:128px;" width="8" height="9.4" viewBox="0 0 8 9.4"><path d="M0.8 0.4 H7 L3.9 3.4 Z" fill="#dcdcdc"/><path d="M0 4.6 H7.8" stroke="#dcdcdc" stroke-width="0.7"/><path d="M0.9 8.9 H6.9 L3.9 5.9 Z" fill="none" stroke="#dcdcdc" stroke-width="0.8"/></svg>
<div style="left:938.5px;top:144.8px;width:2.3px;height:2.3px;background:#dcdcdc;border-radius:50%;"></div>
<div style="left:941.75px;top:144.8px;width:2.3px;height:2.3px;background:#dcdcdc;border-radius:50%;"></div>
<div style="left:945.0px;top:144.8px;width:2.3px;height:2.3px;background:#dcdcdc;border-radius:50%;"></div>
<div style="left:793px;top:155px;width:164px;height:1px;background:#494949;"></div>
<div class="t" style="left:799px;transform-origin:0 50%;top:160.0px;font-size:9px;line-height:12px;color:#e0e0e0;font-weight:400;transform:scaleX(0.699);">Aussehen</div>
<svg style="left:799.5px;top:178.5px;" width="11" height="11" viewBox="0 0 11 11"><rect x="0" y="0" width="10.8" height="10.4" fill="#fff"/><path d="M0.3 10.2 L10.6 0.4" stroke="#ee1c25" stroke-width="1.3"/></svg>
<div class="t" style="left:819px;transform-origin:0 50%;top:178.0px;font-size:9px;line-height:12px;color:#bcbcbc;font-weight:400;transform:scaleX(0.648);">Fläche</div>
<svg style="left:799.5px;top:197px;" width="11" height="11" viewBox="0 0 11 11"><rect x="0.5" y="0.5" width="10" height="10" fill="#1c1c1c" stroke="#8c8c8c" stroke-width="0.6"/><rect x="2.8" y="2.8" width="5.4" height="5.4" fill="#555" stroke="#7a7a7a" stroke-width="0.6"/></svg>
<div class="t" style="left:819.5px;transform-origin:0 50%;top:196.5px;font-size:9px;line-height:12px;color:#f2f2f2;font-weight:400;transform:scaleX(0.697);">Kontur</div>
<div style="left:819.5px;top:207.5px;width:18.5px;height:1px;border-top:1px dotted #bdbdbd;"></div>
<div style="left:853px;top:196.5px;width:11px;height:12px;background:#434343;border:1px solid #5a5a5a;"></div>
<svg style="left:855px;top:198px;" width="7" height="9" viewBox="0 0 7 9"><path d="M1 3 L3.5 0.8 L6 3 M1 6 L3.5 8.2 L6 6" stroke="#dcdcdc" stroke-width="0.9" fill="none"/></svg>
<div style="left:864px;top:196.5px;width:22px;height:12px;background:#434343;border:1px solid #464646;overflow:hidden;"></div>
<div class="t" style="left:866.5px;transform-origin:0 50%;top:196.0px;font-size:9px;line-height:12px;color:#f2f2f2;font-weight:400;transform:scaleX(0.799);">1 pt</div>
<div style="left:886px;top:196.5px;width:11px;height:12px;background:#434343;border:1px solid #5a5a5a;border-left:none;"></div>
<svg style="left:888px;top:200.5px;" width="7" height="5" viewBox="0 0 7 5"><path d="M1 1 L3.5 3.5 L6 1" stroke="#dcdcdc" stroke-width="1.1" fill="none"/></svg>
<svg style="left:799.5px;top:216px;" width="11" height="11" viewBox="0 0 11 11"><rect x="0.5" y="0.5" width="10" height="10" fill="#6a6a6a" stroke="#9a9a9a" stroke-width="0.7"/><rect x="2.6" y="2.6" width="2.9" height="2.9" fill="#7c7c7c"/><rect x="5.5" y="5.5" width="2.9" height="2.9" fill="#7c7c7c"/></svg>
<div class="t" style="left:819.5px;transform-origin:0 50%;top:216.0px;font-size:9px;line-height:12px;color:#f2f2f2;font-weight:400;transform:scaleX(0.697);">Deckkraft</div>
<div style="left:819.5px;top:227px;width:26.5px;height:1px;border-top:1px dotted #bdbdbd;"></div>
<div style="left:853px;top:216px;width:33px;height:12px;background:#434343;border:1px solid #464646;overflow:hidden;"></div>
<div class="t" style="left:855.5px;transform-origin:0 50%;top:215.5px;font-size:9px;line-height:12px;color:#f2f2f2;font-weight:400;transform:scaleX(0.716);">100%</div>
<div style="left:886px;top:216px;width:11px;height:12px;background:#434343;border:1px solid #5a5a5a;border-left:none;"></div>
<svg style="left:889.5px;top:218.5px;" width="5" height="7" viewBox="0 0 5 7"><path d="M1 1 L3.5 3.5 L1 6" stroke="#dcdcdc" stroke-width="1.1" fill="none"/></svg>
<div class="t" style="left:803.5px;transform-origin:0 50%;top:233.0px;font-size:10px;line-height:13px;color:#e0e0e0;font-weight:400;transform:scaleX(0.900);font-style:italic;font-family:'Liberation Serif',serif;">fx</div>
<div style="left:811.3px;top:242.6px;width:1.2px;height:1.2px;background:#e0e0e0;"></div>
<div style="left:938.5px;top:255.0px;width:2.3px;height:2.3px;background:#dcdcdc;border-radius:50%;"></div>
<div style="left:941.75px;top:255.0px;width:2.3px;height:2.3px;background:#dcdcdc;border-radius:50%;"></div>
<div style="left:945.0px;top:255.0px;width:2.3px;height:2.3px;background:#dcdcdc;border-radius:50%;"></div>
<div style="left:793px;top:265px;width:164px;height:1px;background:#494949;"></div>
<div class="t" style="left:799.2px;transform-origin:0 50%;top:274.5px;font-size:9px;line-height:12px;color:#e6e6e6;font-weight:400;transform:scaleX(0.710);">Konvertieren:</div>
<svg style="left:848px;top:275px;" width="10" height="11" viewBox="0 0 10 11"><path d="M2.4 2 L7.6 9.6 M2.4 2 V10" stroke="#dcdcdc" stroke-width="1" fill="none"/><rect x="0.8" y="0.4" width="3.2" height="3.2" fill="#dcdcdc"/></svg>
<svg style="left:865px;top:275px;" width="11" height="11" viewBox="0 0 11 11"><path d="M1.2 10 C1.6 5 4 2 10.4 1" stroke="#dcdcdc" stroke-width="1" fill="none"/><rect x="3" y="2.6" width="3.2" height="3.2" fill="#dcdcdc"/></svg>
<div style="left:793px;top:291px;width:164px;height:1px;background:#4f4f4f;"></div>
<div class="t" style="left:799.2px;transform-origin:0 50%;top:298.0px;font-size:9px;line-height:12px;color:#e6e6e6;font-weight:400;transform:scaleX(0.716);">Ankerpunkte:</div>
<svg style="left:845.2px;top:298.8px;overflow:visible;" width="12" height="12" viewBox="0 0 12 12"><g transform="translate(6.6 6.6) scale(0.78) rotate(45) translate(-6.5 -5.5)"><path d="M4 -1.6 H9 V0.8 H4 Z M3.4 1.6 H9.6 L10.2 6.4 L6.5 12.6 L2.8 6.4 Z" fill="#dcdcdc"/><circle cx="6.5" cy="6.6" r="1.1" fill="#535353"/><path d="M6.5 7.2 V12" stroke="#535353" stroke-width="0.8"/></g><path d="M0.4 1.4 H3.4" stroke="#dcdcdc" stroke-width="1"/></svg>
<svg style="left:865px;top:299px;" width="11" height="11" viewBox="0 0 11 11"><path d="M1.6 10 C1.6 5 4 2 9 1.6" stroke="#767676" stroke-width="1.2" fill="none"/><rect x="8" y="0.4" width="2.4" height="2.4" fill="#767676"/><rect x="0.6" y="8.4" width="2.4" height="2.4" fill="#767676"/></svg>
<svg style="left:884px;top:299px;" width="12" height="11" viewBox="0 0 12 11"><path d="M1.6 8.5 C1.6 4.6 4.4 1.8 8.2 1.8" stroke="#dcdcdc" stroke-width="1.1" fill="none"/><path d="M4.1 5.6 L10.8 9.3 M4.9 9.3 L10.2 5.2" stroke="#dcdcdc" stroke-width="1"/><rect x="0.3" y="7.2" width="2.6" height="2.6" fill="#dcdcdc"/><circle cx="8.4" cy="1.8" r="1.4" fill="#dcdcdc"/></svg>
<div style="left:793px;top:317px;width:164px;height:1px;background:#4f4f4f;"></div>
<div class="t" style="left:799.2px;transform-origin:0 50%;top:324.0px;font-size:9px;line-height:12px;color:#e0e0e0;font-weight:400;transform:scaleX(0.708);">Schnellaktionen</div>
<div style="left:799px;top:341px;width:123px;height:14px;background:#4e4e4e;border:1px solid #6e6e6e;"></div>
<div class="t" style="left:820.5px;transform-origin:0 50%;top:341.8px;font-size:9px;line-height:12px;color:#ffffff;font-weight:400;transform:scaleX(0.723);-webkit-text-stroke:0.35px;">Globale Bearbeitung starten</div>
<div style="left:923px;top:341px;width:14px;height:14px;background:#4e4e4e;border:1px solid #6e6e6e;"></div>
<svg style="left:926.5px;top:346px;" width="7" height="5" viewBox="0 0 7 5"><path d="M1 1 L3.5 3.5 L6 1" stroke="#dcdcdc" stroke-width="1" fill="none"/></svg>
<svg style="left:782.5px;top:46.4px;" width="7" height="4.4" viewBox="0 0 7 4.4"><path d="M0.8 3.6 L3.5 1 L6.2 3.6" stroke="#a6a6a6" stroke-width="1.1" fill="none"/></svg>
<svg style="left:782.5px;top:518.6px;" width="7" height="4.4" viewBox="0 0 7 4.4"><path d="M0.8 0.8 L3.5 3.4 L6.2 0.8" stroke="#a6a6a6" stroke-width="1.1" fill="none"/></svg>
<div style="left:31.2px;top:527px;width:284px;height:10.2px;background:#4a4a4a;"></div>
<div style="left:33px;top:527.3px;width:43px;height:9.8px;background:#3f3f3f;"></div>
<div class="t" style="left:34.5px;transform-origin:0 50%;top:527.55px;font-size:8.5px;line-height:11.5px;color:#f4f4f4;font-weight:400;transform:scaleX(0.804);">182,08%</div>
<svg style="left:67.5px;top:531.3px;" width="6" height="4" viewBox="0 0 6 4"><path d="M0.8 0.8 L3 3 L5.2 0.8" stroke="#dcdcdc" stroke-width="1.1" fill="none"/></svg>
<svg style="left:80px;top:530.3px;" width="7" height="6" viewBox="0 0 7 6"><path d="M1 0.5 V5.5" stroke="#707070" stroke-width="1"/><path d="M6 0.5 V5.5 L2 3 Z" fill="#707070"/></svg>
<svg style="left:93px;top:530.3px;" width="6" height="6" viewBox="0 0 6 6"><path d="M5 0.5 V5.5 L1 3 Z" fill="#707070"/></svg>
<div style="left:103px;top:527.3px;width:38px;height:9.8px;background:#3f3f3f;"></div>
<div class="t" style="left:106px;transform-origin:0 50%;top:527.55px;font-size:8.5px;line-height:11.5px;color:#f4f4f4;font-weight:400;transform:scaleX(0.845);">1</div>
<svg style="left:134px;top:531.3px;" width="6" height="4" viewBox="0 0 6 4"><path d="M0.8 0.8 L3 3 L5.2 0.8" stroke="#dcdcdc" stroke-width="1.1" fill="none"/></svg>
<svg style="left:148px;top:530.3px;" width="6" height="6" viewBox="0 0 6 6"><path d="M1 0.5 V5.5 L5 3 Z" fill="#707070"/></svg>
<svg style="left:158px;top:530.3px;" width="7" height="6" viewBox="0 0 7 6"><path d="M6 0.5 V5.5" stroke="#707070" stroke-width="1"/><path d="M1 0.5 V5.5 L5 3 Z" fill="#707070"/></svg>
<div class="t" style="left:224px;transform-origin:0 50%;top:527.75px;font-size:7.5px;line-height:10.5px;color:#cfcfcf;font-weight:400;transform:scaleX(0.846);">Auswahl</div>
<svg style="left:305px;top:530.3px;" width="5" height="6" viewBox="0 0 5 6"><path d="M0.5 0.3 V5.7 L4.5 3 Z" fill="#dcdcdc"/></svg>
<svg style="left:317px;top:530.8px;" width="4" height="5" viewBox="0 0 4 5"><path d="M3 0.5 L1 2.5 L3 4.5" stroke="#a0a0a0" stroke-width="0.9" fill="none"/></svg>
<svg style="left:772px;top:530.8px;" width="4" height="5" viewBox="0 0 4 5"><path d="M1 0.5 L3 2.5 L1 4.5" stroke="#a0a0a0" stroke-width="0.9" fill="none"/></svg>
<div style="left:539px;top:527.8px;width:16px;height:8.6px;background:#606060;border-radius:4.3px;"></div>
</div></body></html>
